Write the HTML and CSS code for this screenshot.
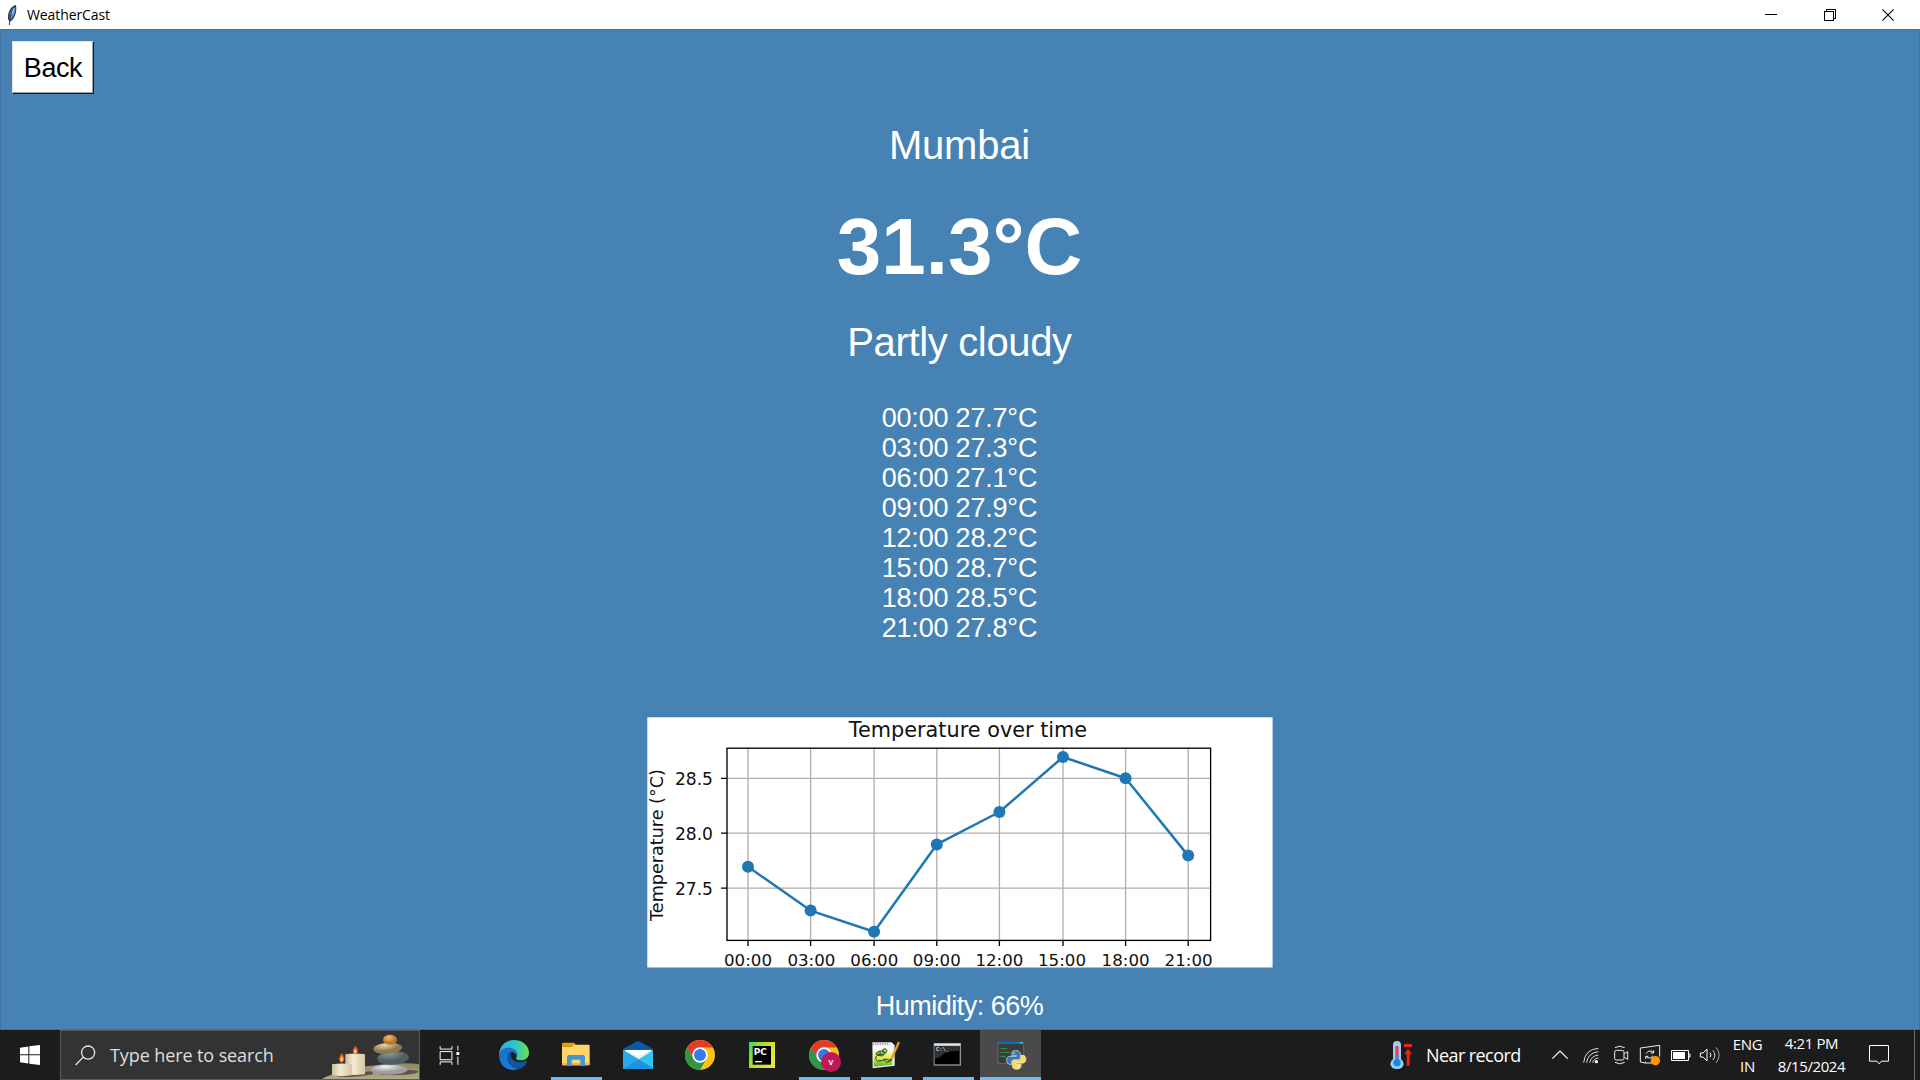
FILE: index.html
```html
<!DOCTYPE html>
<html lang="en">
<head>
<meta charset="utf-8">
<title>WeatherCast</title>
<link rel="stylesheet" href="styles.css">
</head>
<body>
<div class="desktop">
  <header class="titlebar">
    <svg class="feather" viewBox="0 0 36 66"><path d="M30 3C16 5 4 22 6 46l6 7C24 47 34 26 30 3Z" fill="#28364c"/><path d="M27 7C17 13 9 27 10 44l5 2C24 37 30 24 27 7Z" fill="#5b92d6"/><path d="M27 5C17 18 12 36 10 63" fill="none" stroke="#333" stroke-width="3"/><path d="M24 13 18 30" stroke="#b6d2f2" stroke-width="3"/></svg>
    <span class="app-name">WeatherCast</span>
    <div class="window-buttons">
      <svg viewBox="0 0 12 12" shape-rendering="crispEdges"><path d="M0 5.500h12" stroke="#000"/></svg>
      <svg viewBox="0 0 12 12" shape-rendering="crispEdges"><path d="M2.500 2V.5h9v9H10M.5 2.500h9v9h-9z" fill="none" stroke="#000"/></svg>
      <svg viewBox="0 0 12 12"><path d="M.4.4 11.600 11.600M11.600.4.4 11.600" stroke="#000" stroke-width="1.100"/></svg>
    </div>
  </header>

  <main class="weather">
    <button class="back">Back</button>
    <div class="city">Mumbai</div>
    <div class="temperature">31.3°C</div>
    <div class="condition">Partly cloudy</div>
    <div class="hours">
      <div>00:00 27.7°C</div>
      <div>03:00 27.3°C</div>
      <div>06:00 27.1°C</div>
      <div>09:00 27.9°C</div>
      <div>12:00 28.2°C</div>
      <div>15:00 28.7°C</div>
      <div>18:00 28.5°C</div>
      <div>21:00 27.8°C</div>
    </div>
    <svg class="chart" viewBox="647 717 626 251">
      <rect x="647.3" y="717.3" width="625.3" height="250.2" fill="#fff"/>
      <path class="grid" d="M748 748V940M810.6 748V940M874.1 748V940M936.8 748V940M999.4 748V940M1063 748V940M1125.6 748V940M1188.2 748V940M727 778.3H1210M727 833.2H1210M727 888.2H1210"/>
      <path class="ticks" d="M748 940v6M810.6 940v6M874.1 940v6M936.8 940v6M999.4 940v6M1063 940v6M1125.6 940v6M1188.2 940v6M727 778.3h-6M727 833.2h-6M727 888.2h-6"/>
      <polyline class="series" points="748,866.7 810.6,910.6 874.1,931.8 936.8,844.4 999.4,812 1063,757 1125.6,778.3 1188.2,855.6"/>
      <g class="dots"><circle cx="748" cy="866.7" r="6"/><circle cx="810.6" cy="910.6" r="6"/><circle cx="874.1" cy="931.8" r="6"/><circle cx="936.8" cy="844.4" r="6"/><circle cx="999.4" cy="812" r="6"/><circle cx="1063" cy="757" r="6"/><circle cx="1125.6" cy="778.3" r="6"/><circle cx="1188.2" cy="855.6" r="6"/></g>
      <rect class="frame" x="727" y="748.2" width="483.6" height="192.2"/>
      <text class="chart-title" x="968" y="737.3">Temperature over time</text>
      <text class="axis-name" transform="translate(662.5 845) rotate(-90)">Temperature (°C)</text>
      <g class="y-labels"><text x="713" y="785">28.5</text><text x="713" y="840">28.0</text><text x="713" y="895">27.5</text></g>
      <g class="x-labels"><text x="748" y="966">00:00</text><text x="811.4" y="966">03:00</text><text x="874.3" y="966">06:00</text><text x="936.8" y="966">09:00</text><text x="999.4" y="966">12:00</text><text x="1062" y="966">15:00</text><text x="1125.6" y="966">18:00</text><text x="1188.6" y="966">21:00</text></g>
    </svg>
    <div class="humidity">Humidity: 66%</div>
  </main>

  <footer class="taskbar">
    <div class="start"><svg viewBox="0 0 60 60"><path d="M0 8 25 4.500V28H0ZM28 4 60 0V28H28ZM0 31H25V55.500L0 52ZM28 31H60V60L28 56Z" fill="#fff"/></svg></div>
    <div class="search">
      <svg class="lens" viewBox="224 74 64 62"><g fill="none" stroke="#e6e6e6" stroke-width="4"><circle cx="264" cy="96" r="20"/><path d="M249 110 226 134"/></g></svg>
      <span class="search-text">Type here to search</span>
      <svg class="scene" viewBox="60 33 297 144">
        <defs>
          <linearGradient id="wax"><stop offset="0" stop-color="#cbbfa0"/><stop offset=".4" stop-color="#f3ead2"/><stop offset="1" stop-color="#d5c7a6"/></linearGradient>
          <linearGradient id="sand" x2="0" y2="1"><stop offset="0" stop-color="#8e8467"/><stop offset="1" stop-color="#b3a988"/></linearGradient>
          <radialGradient id="orange" cx=".4" cy=".3"><stop offset="0" stop-color="#f0ba73"/><stop offset="1" stop-color="#bb7526"/></radialGradient>
          <radialGradient id="tan" cx=".4" cy=".2"><stop offset="0" stop-color="#e5d3aa"/><stop offset="1" stop-color="#8f7b51"/></radialGradient>
          <radialGradient id="slate" cx=".4" cy=".2"><stop offset="0" stop-color="#87979b"/><stop offset="1" stop-color="#4e5e63"/></radialGradient>
          <radialGradient id="pale" cx=".4" cy=".2"><stop offset="0" stop-color="#f4f4f4"/><stop offset="1" stop-color="#9e9ea4"/></radialGradient>
        </defs>
        <path d="M64 178Q120 146 230 135Q310 126 357 132V178Z" fill="url(#sand)"/>
        <path d="M110 168q70-12 105-14l5 8q-50 12-100 8zM230 158l95-8q30 0 30 6-20 12-110 8z" fill="#5e543d"/>
        <path d="M136 103q30-5 59 0v60q-30 4-59 0z" fill="url(#wax)"/>
        <path d="M96 133q30-5 60 0v33q-30 5-60 0z" fill="url(#wax)"/>
        <path d="M166 78q16 16 0 25-16-7 0-25zM125 99q16 18 0 30-16-10 0-30z" fill="#e8582c"/>
        <path d="M166 86q8 10 0 15-8-5 0-15zM125 108q8 12 0 18-8-6 0-18z" fill="#ffd261"/>
        <ellipse cx="267" cy="149" rx="55" ry="15" fill="url(#pale)"/>
        <ellipse cx="279" cy="114" rx="48" ry="20" fill="url(#slate)" transform="rotate(-4 279 114)"/>
        <ellipse cx="263" cy="85" rx="43" ry="17" fill="url(#tan)" transform="rotate(-4 263 85)"/>
        <ellipse cx="270" cy="59" rx="21" ry="15" fill="url(#orange)"/>
      </svg>
    </div>
    <div class="task-view"><svg viewBox="418 72 64 60"><g fill="none" stroke="#fff" stroke-width="3"><path d="M421.500 75v9h36v-9M421.500 132v-9h36v9M421.500 91.500h36v25h-36zM475.500 74v14M475.500 107v25"/></g><path d="M471 93h9v9h-9z" fill="#fff"/></svg></div>
    <div class="apps">
      <div class="app"><svg viewBox="597 60 90 90">
        <defs><linearGradient id="e1"><stop offset="0" stop-color="#35a8e8"/><stop offset=".5" stop-color="#2cc3cf"/><stop offset="1" stop-color="#6de046"/></linearGradient><linearGradient id="e2" x2="0" y2="1"><stop offset="0" stop-color="#1d6fc0"/><stop offset="1" stop-color="#1180dc"/></linearGradient></defs>
        <path d="M597 104C599 76 617 60 642 60 669 60 687 79 687 98 687 114 675 121 661 121 650 121 646 117 649 112 654 107 652 95 641 92Z" fill="url(#e1)"/>
        <path d="M597 104C600 87 618 80 633 84 650 88 655 100 650 111 649 101 642 94 634 96 622 100 620 118 629 130 638 143 650 148 656 147 620 158 597 134 597 104Z" fill="url(#e2)"/>
        <path d="M634 96C622 101 618 119 629 133 637 144 650 149 657 147 668 144 678 135 681 126 682 122 679 121 675 123 659 130 641 126 635 114 632 107 633 100 634 96Z" fill="#1253a0"/></svg></div>
      <div class="app open"><svg viewBox="33 60 90 90"><path d="M36 71q0-3 3-3h34l4 7h-8l-6 5H36z" fill="#e0a106"/><path d="M36 80h28l6-6h46q3 0 3 3v56q0 3-3 3H36z" fill="#ffd768"/><path d="M36 129h83v4q0 3-3 3H36z" fill="#eeb93e"/><path d="M51 138v-28q0-5 5-5h44q5 0 5 5v28H91v-19H65v19z" fill="#4096da"/></svg></div>
      <div class="app"><svg viewBox="219 60 90 90"><path d="M219 87 258 65q6-3 12 0l39 22v8H219z" fill="#0a59a8"/><path d="M224 90h81v30h-81z" fill="#f3f3f3"/><path d="M224 90h81L264 108z" fill="#fff"/><path d="M219 91 266 118 309 91V147H219Z" fill="#32c4f2"/><path d="M219 91 309 144V147H219Z" fill="#2090df"/><path d="M219 91 266 118 219 147Z" fill="#29a9e9"/></svg></div>
      <div class="app"><svg viewBox="0 0 90 90"><circle cx="45" cy="45" r="45" fill="#fbc116"/><path d="M6 22.500A45 45 0 0 1 84 22.500H45L25.500 56.300Z" fill="#e33b2e"/><path d="M6 22.500A45 45 0 0 0 45 90L64.500 56.300H25.500Z" fill="#2b9747"/><circle cx="45" cy="45" r="23" fill="#fff"/><circle cx="45" cy="45" r="18" fill="#3579ea"/></svg></div>
      <div class="app"><svg viewBox="591 60 90 90"><defs><linearGradient id="pc" x2="1" y2=".5"><stop offset="0" stop-color="#20dc85"/><stop offset=".4" stop-color="#a5dc26"/><stop offset="1" stop-color="#e7e83c"/></linearGradient></defs><path d="M597 66h78v78h-78z" fill="url(#pc)"/><path d="M608 78h55v56h-55z" fill="#000"/><text class="pc-label" x="611" y="105">PC</text><path d="M615 123h21v4h-21z" fill="#fff"/></svg></div>
      <div class="app open"><svg viewBox="0 0 90 90"><circle cx="45" cy="45" r="45" fill="#fbc116"/><path d="M6 22.500A45 45 0 0 1 84 22.500H45L25.500 56.300Z" fill="#e33b2e"/><path d="M6 22.500A45 45 0 0 0 45 90L64.500 56.300H25.500Z" fill="#2b9747"/><circle cx="45" cy="45" r="23" fill="#fff"/><circle cx="45" cy="45" r="18" fill="#3579ea"/><circle cx="66" cy="66" r="30" fill="#c2185b"/><text class="profile" x="66" y="74">V</text></svg></div>
      <div class="app open"><svg viewBox="243 60 90 90"><defs><linearGradient id="npp" x2="0" y2="1"><stop offset=".2" stop-color="#fafafa"/><stop offset=".55" stop-color="#e7ee4c"/><stop offset="1" stop-color="#48b82e"/></linearGradient></defs><path d="M247 67h58l9 9v61l-66 8z" fill="#eee"/><path d="M251 78h56v56l-56 6z" fill="url(#npp)"/><path d="M250 68v7m7-7v7m7-7v7m7-7v7m7-7v7m7-7v7m7-7v7" stroke="#777" stroke-width="2"/><path d="M258 99q10-10 23-5l4 6-7 8-18-2zM278 89q10-7 13 3l-5 8-8-5z" fill="#8be03e" stroke="#234016" stroke-width="2.500"/><path d="M259 108q-7 10 4 15 14 2 22-6l15 4M280 117l10 10 10-4M262 103h20M270 94v12" fill="none" stroke="#26431b" stroke-width="3"/><path d="M304 118 327 66" stroke="#d58f16" stroke-width="7"/><path d="M303 118 325 68" stroke="#f5cc4c" stroke-width="2"/><path d="m299 126 2-10 6 3z" fill="#333"/></svg></div>
      <div class="app open"><svg viewBox="429 60 90 90"><path d="M431 69h82v68h-82z" fill="#8e959c"/><path d="M433 71h78v6h-78z" fill="#dde4ea"/><path d="M434 79h75v54h-75z" fill="#000"/><path d="M434 79h75v14q-45-2-54 14-8 8-21 8z" fill="#303030"/><text class="prompt" x="438" y="93">C:\_</text></svg></div>
      <div class="app open active"><svg viewBox="615 60 90 90"><path d="M621 67h77v64h-77z" fill="#3c3c3c" stroke="#686868" stroke-width="3"/><path d="M619 65h80v7h-80z" fill="#0870bc"/><path d="M686 67h10v3h-10z" fill="#8bc6ef"/><path d="M628 86h20M628 97h30M628 109h18" stroke="#2f9440" stroke-width="3"/><g stroke="#eee" stroke-width="2"><path d="M675 92c-12 0-13 4-13 9v5h14v3h-20c-12 0-12 23 0 24h6v-7q0-7 7-7h13q6 0 6-6v-12c0-5-4-9-13-9z" fill="#3677ad"/><path d="M690 106v8q0 7-7 7h-13q-6 0-6 6v11c0 13 26 13 26 0v-6h-14v-3h20c12-1 11-23 0-23z" fill="#ffdc4e"/></g><circle cx="669" cy="99" r="2.500" fill="#fff"/><circle cx="683" cy="139" r="2.500" fill="#fff"/></svg></div>
    </div>

    <div class="weather-widget">
      <svg viewBox="60 60 69 90"><path d="M69 117V75q0-12 12-12t12 12v42q9 7 8 15-2 15-20 15t-20-15q0-9 8-15z" fill="#9bcdf5"/><path d="M76 82q0-5 5-5t5 5v30H76z" fill="#ed4051"/><path d="M76 104h10v18H76z" fill="#6d79c5"/><circle cx="81" cy="128" r="11" fill="#168bdb"/><path d="M102 72h24v9h-24zM114 86l12 17h-7v34h-9v-34h-7z" fill="#f4210c"/></svg>
      <span>Near record</span>
    </div>
    <div class="tray">
      <svg viewBox="525 60 90 90"><path d="m547 116 23-23 23 23" fill="none" stroke="#fff" stroke-width="3.500"/></svg>
      <svg viewBox="615 60 90 90"><g fill="none" stroke="#ddd" stroke-width="3"><path d="M641 128Q645 88 685 85M650 128Q654 98 685 95M659 128Q663 108 685 105M668 128Q670 116 685 114"/></g><circle cx="679" cy="125" r="5" fill="#fff"/></svg>
      <svg viewBox="705 60 90 90"><g fill="none" stroke="#eee" stroke-width="3"><rect x="734" y="91" width="28" height="29" rx="5"/><path d="m763 101 10-6v23l-10-6M735 83q14-9 29 0M735 127q14 9 29 0"/></g></svg>
      <svg viewBox="45 60 90 90"><g fill="none" stroke="#eee" stroke-width="3"><path d="M96 129H76v-4M76 129l-15-3V84l58-8v34"/><path d="M78 101q4-10 18-8l3 5M101 91v8h-9M99 107q-5 9-16 7l-4-5M77 117v-8h8"/></g><circle cx="106" cy="122" r="14" fill="#ff9800"/></svg>
      <svg viewBox="135 60 90 90"><path d="M154.500 91.500h51v30h-51zM207 102h3v9h-3" fill="none" stroke="#fff" stroke-width="3"/><path d="M159 96h36v21h-36z" fill="#fff"/></svg>
      <svg viewBox="225 60 90 90"><g fill="none" stroke="#fff" stroke-width="3"><path d="M241 99h8l12-12v36l-12-12h-8z"/><path d="M270 98q6 7 0 14"/><path d="M279 91q11 14 0 29" stroke="#ddd"/><path d="M288 82q19 23 0 47" stroke="#aaa"/></g></svg>
    </div>
    <div class="language"><span>ENG</span><span>IN</span></div>
    <div class="clock"><span>4:21 PM</span><span class="date">8/15/2024</span></div>
    <svg class="notifications" viewBox="747 75 60 60"><path d="M748.500 76.500h57v47h-21l-7 8-7-8h-22z" fill="none" stroke="#fff" stroke-width="3"/></svg>
    <div class="show-desktop"></div>
  </footer>
</div>
</body>
</html>
```
FILE: styles.css
```css
* { box-sizing: border-box; }
body { margin: 0; overflow: hidden; }
svg { display: block; flex: none; }

.desktop {
  display: flex;
  flex-direction: column;
  width: 1920px;
  height: 1080px;
  font-family: "Open Sans", "Noto Sans", sans-serif;
}

.titlebar {
  display: flex;
  align-items: center;
  height: 29px;
  padding-left: 6px;
  background: #fff;
}
.feather { width: 12px; height: 22px; margin-right: 9px; }
.app-name { font-size: 14px; letter-spacing: -.1px; color: #000; }
.window-buttons { display: flex; gap: 46.5px; margin: 0 26px 0 auto; }
.window-buttons svg { width: 12px; height: 12px; }

.weather {
  display: flex;
  flex-direction: column;
  align-items: center;
  height: 1001px;
  padding: 11px 12px 0 11px;
  border: 1px solid #3d74a3;
  background: #4682b4;
  color: #fff;
  font-family: "Liberation Sans", Arial, sans-serif;
  white-space: nowrap;
}
.weather > * { flex: none; }
.back {
  align-self: flex-start;
  width: 82px;
  height: 53px;
  padding: 0;
  border: 1px solid;
  border-color: #e3e3e3 #181818 #181818 #e3e3e3;
  box-shadow: inset -1px -1px #a0a0a0;
  background: #fff;
  color: #000;
  font: 27px/50px "Liberation Sans", Arial, sans-serif;
  letter-spacing: -.4px;
}
.city, .condition { font-size: 40px; line-height: 46px; letter-spacing: -.35px; }
.city { margin-top: 28px; letter-spacing: -.2px; }
.temperature { margin-top: 33px; font-size: 80px; font-weight: bold; line-height: 92px; }
.condition { margin-top: 26px; }
.hours { margin-top: 38px; font-size: 27px; line-height: 30px; letter-spacing: -.2px; }
.chart { width: 626px; height: 251px; margin-top: 74px; margin-left: 1px; overflow: visible; }
.humidity { margin-top: 23px; font-size: 27px; line-height: 30px; letter-spacing: -.5px; }

.chart text { font-family: "DejaVu Sans", sans-serif; font-size: 16.67px; fill: #111; text-anchor: middle; }
.chart .chart-title { font-size: 20.8px; }
.chart .axis-name { font-size: 17.6px; }
.chart .y-labels text { font-size: 17.1px; text-anchor: end; }
.grid { stroke: #b0b0b0; stroke-width: 1.33; fill: none; }
.ticks { stroke: #000; stroke-width: 1.33; fill: none; }
.frame { stroke: #000; stroke-width: 1.33; fill: none; }
.series { stroke: #1f77b4; stroke-width: 2.5; fill: none; stroke-linejoin: round; }
.dots { fill: #1f77b4; }

.taskbar {
  display: flex;
  height: 50px;
  background: #1c1c1c;
  color: #fff;
  white-space: nowrap;
}
.start { display: flex; align-items: center; justify-content: center; width: 60px; }
.start svg { width: 20px; height: 20px; }
.search {
  display: flex;
  align-items: center;
  width: 360px;
  padding-left: 14px;
  border: 1px solid #5b5b5b;
  background: #333;
}
.lens { width: 21px; height: 21px; }
.search-text { width: 210px; margin-left: 14px; font-size: 18px; letter-spacing: -.1px; color: #dedede; }
.scene { width: 99px; height: 48px; }
.task-view { display: flex; align-items: center; width: 63px; padding-left: 19px; }
.task-view svg { width: 21px; height: 20px; }

.apps { display: flex; }
.app {
  display: flex;
  flex-direction: column;
  align-items: center;
  width: 62px;
  padding-top: 10px;
}
.app svg { width: 30px; height: 30px; overflow: visible; }
.open::after { content: ""; width: 51px; height: 3px; margin-top: 7px; background: #76b9ed; }
.active { width: 61px; margin-left: 1px; background: #4a4a4a; }
.active::after { width: 61px; }
.pc-label { font: bold 27px "DejaVu Sans", sans-serif; fill: #fff; }
.profile { font: bold 22px "Open Sans", sans-serif; fill: #fff; text-anchor: middle; }
.prompt { font: bold 16px "Liberation Mono", monospace; fill: #ddd; }

.weather-widget { display: flex; align-items: center; width: 155px; margin-left: auto; font-size: 18px; }
.weather-widget svg { width: 23px; height: 30px; }
.weather-widget span { margin-left: 13px; letter-spacing: -.58px; }
.tray { display: flex; align-items: center; }
.tray svg { width: 30px; height: 30px; }
.language, .clock {
  display: flex;
  flex-direction: column;
  align-items: center;
  padding-top: 3px;
  font-size: 15px;
  line-height: 22px;
}
.language { width: 45px; letter-spacing: -.3px; }
.clock { width: 83px; line-height: 23px; padding-top: 2px; letter-spacing: -.4px; }
.notifications { width: 20px; height: 20px; margin: 15px 0 0 16px; }
.show-desktop { width: 6px; margin-left: 25px; border-left: 1px solid #6b6b6b; }
```
